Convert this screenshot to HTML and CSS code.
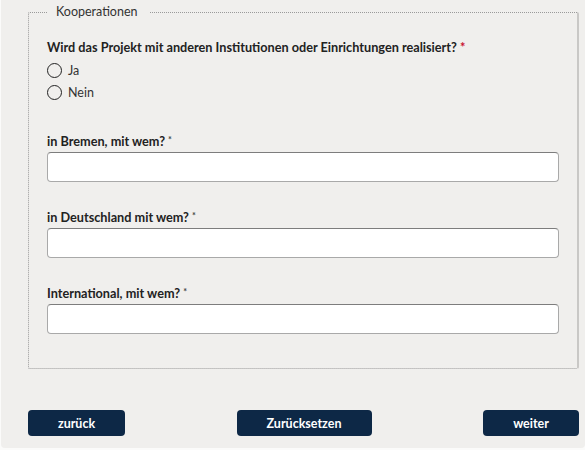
FILE: index.html
```html
<!DOCTYPE html>
<html lang="de">
<head>
    <meta charset="UTF-8">
    <meta name="viewport" content="width=device-width, initial-scale=1.0">
    <title>Kooperationen</title>
    <link rel="stylesheet" href="styles.css">
</head>
<body>
    <form class="page">
        <fieldset class="group">
            <legend>Kooperationen</legend>

            <div class="question">
                <p class="question-text">Wird das Projekt mit anderen Institutionen oder Einrichtungen realisiert? <span class="req">*</span></p>
                <label class="radio"><input type="radio" name="koop" value="ja"> Ja</label>
                <label class="radio"><input type="radio" name="koop" value="nein"> Nein</label>
            </div>

            <div class="field">
                <label for="bremen">in Bremen, mit wem? <span class="star">*</span></label>
                <input type="text" id="bremen" class="text-input">
            </div>

            <div class="field">
                <label for="deutschland">in Deutschland mit wem? <span class="star">*</span></label>
                <input type="text" id="deutschland" class="text-input">
            </div>

            <div class="field">
                <label for="international">International, mit wem? <span class="star">*</span></label>
                <input type="text" id="international" class="text-input">
            </div>
        </fieldset>

        <div class="actions">
            <button type="button" class="button button-back">zurück</button>
            <button type="reset" class="button button-reset">Zurücksetzen</button>
            <button type="button" class="button button-next">weiter</button>
        </div>
    </form>
</body>
</html>
```

FILE: styles.css
```css
body {
    margin: 0;
    background-color: #fbfbfa;
    font-family: Lato, "Open Sans", sans-serif;
    font-size: 12.5px;
    color: #222;
}

.page {
    margin: 0 0 0 1px;
    padding: 4px 6px 12px 27px;
    background-color: #f0efed;
    border-radius: 0 0 4px 4px;
}

.group {
    margin: 0;
    padding: 0 18px 34px 18px;
    border: 1px dotted #9a9a9a;
    border-right: 2px solid #c9c8c6;
    border-radius: 2px;
}

.group legend {
    margin-left: 0;
    padding: 0 12px 0 9px;
    line-height: 16px;
    font-size: 12.5px;
    color: #333;
}

.question {
    padding-top: 19px;
}

.question-text {
    margin: 0 0 4px;
    font-size: 12.7px;
    font-weight: bold;
    line-height: 16px;
}

.req {
    color: #c8102e;
}

.star {
    color: #444;
    font-size: 9px;
    line-height: 0;
    vertical-align: 3px;
}

.radio {
    display: flex;
    align-items: center;
    gap: 6px;
    height: 22px;
    color: #333;
}

.radio input {
    appearance: none;
    margin: 0;
    width: 15px;
    height: 15px;
    border: 1.5px solid #222;
    border-radius: 50%;
    background: transparent;
}

.field {
    display: flex;
    flex-direction: column;
    gap: 3px;
    margin-top: 30px;
}

.field label {
    font-size: 12.7px;
    font-weight: bold;
    line-height: 16px;
}

.field + .field {
    margin-top: 27px;
}

.text-input {
    height: 30px;
    box-sizing: border-box;
    margin: 0;
    border: 1px solid #a9a9a9;
    border-top-color: #7d7d7d;
    border-radius: 4px;
    background: #fff;
}

.actions {
    display: flex;
    justify-content: space-between;
    margin-top: 41px;
}

.button {
    height: 26px;
    padding: 0;
    border: none;
    border-radius: 4px;
    background-color: #0d2846;
    color: #fff;
    font-family: inherit;
    font-size: 12.5px;
    font-weight: bold;
    cursor: pointer;
}

.button-back {
    width: 97px;
}

.button-reset {
    width: 135px;
}

.button-next {
    width: 96px;
}
```
